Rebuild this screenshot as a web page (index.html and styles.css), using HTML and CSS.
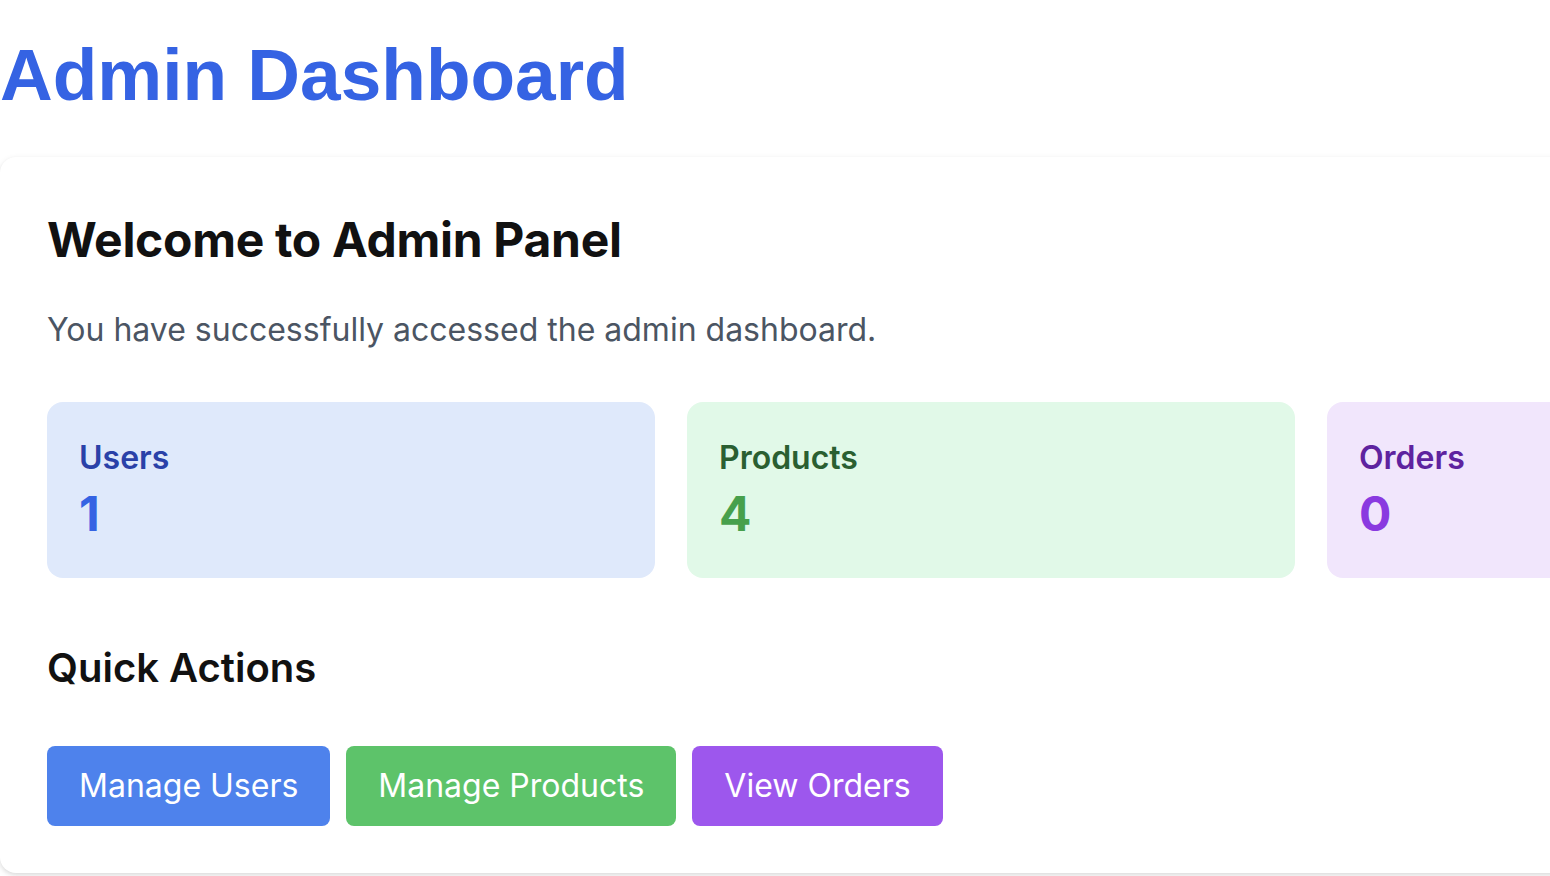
FILE: index.html
```html
<!DOCTYPE html>
<html lang="en">
<head>
<meta charset="utf-8">
<title>Admin Dashboard</title>
<link rel="stylesheet" href="styles.css">
</head>
<body>
  <h1 class="page-title">Admin Dashboard</h1>
  <main class="panel">
    <h2 class="panel-title">Welcome to Admin Panel</h2>
    <p class="panel-text">You have successfully accessed the admin dashboard.</p>
    <div class="stats">
      <div class="stat stat-blue">
        <div class="stat-label">Users</div>
        <div class="stat-value">1</div>
      </div>
      <div class="stat stat-green">
        <div class="stat-label">Products</div>
        <div class="stat-value">4</div>
      </div>
      <div class="stat stat-purple">
        <div class="stat-label">Orders</div>
        <div class="stat-value">0</div>
      </div>
    </div>
    <h3 class="section-title">Quick Actions</h3>
    <div class="actions">
      <a class="btn btn-blue" href="#">Manage Users</a>
      <a class="btn btn-green" href="#">Manage Products</a>
      <a class="btn btn-purple" href="#">View Orders</a>
    </div>
  </main>
</body>
</html>
```
FILE: styles.css
```css
html, body {
  margin: 0;
  padding: 0;
  overflow: hidden;
  background: #ffffff;
}
body {
  font-family: Inter, "Noto Sans", sans-serif;
  width: 1550px;
  height: 876px;
}
.page-title {
  font-family: "Liberation Sans", Arial, sans-serif;
  font-weight: 700;
  font-size: 73px;
  line-height: 80px;
  color: #3563e3;
  margin: 35px 0 42px 0;
}
.panel {
  width: 1982px;
  box-sizing: border-box;
  background: #ffffff;
  border-radius: 16px;
  box-shadow: 0 2px 6px rgba(0, 0, 0, 0.1), 0 2px 4px rgba(0, 0, 0, 0.06);
  padding: 51px 47px 47px 47px;
}
.panel-title {
  font-size: 48px;
  line-height: 64px;
  font-weight: 700;
  letter-spacing: -0.3px;
  color: #111111;
  margin: 0 0 34px 0;
}
.panel-text {
  font-size: 32px;
  line-height: 48px;
  color: #4b5563;
  margin: 0 0 48px 0;
}
.stats {
  display: grid;
  grid-template-columns: repeat(3, 608px);
  gap: 32px;
  margin-bottom: 62px;
}
.stat {
  border-radius: 16px;
  padding: 32px;
}
.stat-label {
  font-size: 32px;
  line-height: 48px;
  font-weight: 600;
}
.stat-value {
  font-size: 48px;
  line-height: 64px;
  font-weight: 700;
}
.stat-blue { background: #dfe9fb; }
.stat-blue .stat-label { color: #2a41a8; }
.stat-blue .stat-value { color: #3563e3; }
.stat-green { background: #e1f9e8; }
.stat-green .stat-label { color: #2a5f31; }
.stat-green .stat-value { color: #47a04c; }
.stat-purple { background: #f1e6fc; }
.stat-purple .stat-label { color: #5e239f; }
.stat-purple .stat-value { color: #8a3ae0; }
.section-title {
  font-size: 40px;
  line-height: 56px;
  font-weight: 600;
  color: #111111;
  margin: 0 0 50px 0;
}
.actions {
  display: flex;
  gap: 16px;
}
.btn {
  display: inline-block;
  padding: 16px 32px;
  font-size: 32px;
  line-height: 48px;
  color: #ffffff;
  text-decoration: none;
  border-radius: 8px;
}
.btn-blue { background: #4e82ec; }
.btn-green { background: #5dc36a; }
.btn-purple { background: #9d57ed; }
```
